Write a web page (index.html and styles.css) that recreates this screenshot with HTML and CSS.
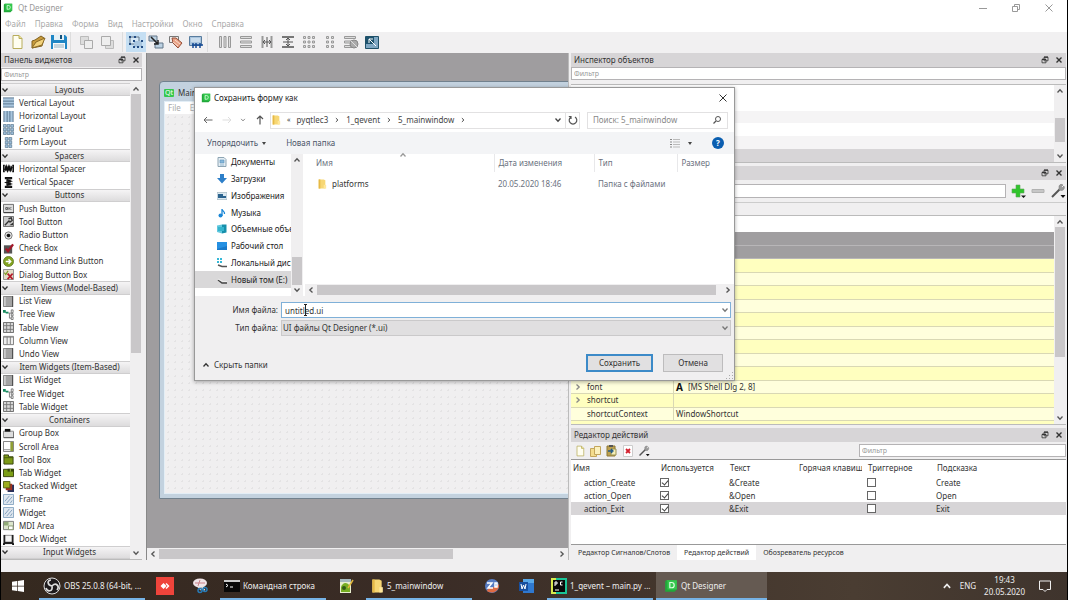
FILE: index.html
```html
<!DOCTYPE html>
<html lang="ru">
<head>
<meta charset="utf-8">
<title>Qt Designer</title>
<link rel="stylesheet" href="styles.css">
</head>
<body>
<svg class="defs" aria-hidden="true">
  <symbol id="chev-d" viewBox="0 0 8 8"><path d="M1.500 2.500 4 5.200 6.500 2.500" fill="none" stroke="currentColor" stroke-width="1.3"/></symbol>
  <symbol id="chev-u" viewBox="0 0 8 8"><path d="M1.500 5.500 4 2.800 6.500 5.500" fill="none" stroke="currentColor" stroke-width="1.3"/></symbol>
  <symbol id="chev-l" viewBox="0 0 8 8"><path d="M5.500 1.500 2.800 4 5.500 6.500" fill="none" stroke="currentColor" stroke-width="1.3"/></symbol>
  <symbol id="chev-r" viewBox="0 0 8 8"><path d="M2.500 1.500 5.200 4 2.500 6.500" fill="none" stroke="currentColor" stroke-width="1.3"/></symbol>
  <symbol id="float" viewBox="0 0 8 8"><path d="M3 1.2h4v3.6H3z M1 3.4h4v3.4H1z" fill="#d8d6d8" stroke="#333" stroke-width=".8"/><path d="M3 1.2h4M1 3.4h4" stroke="#333" stroke-width="1.2"/></symbol>
  <symbol id="close" viewBox="0 0 8 8"><path d="M1.5 1.5l5 5M6.500 1.500l-5 5" stroke="currentColor" stroke-width="1.4"/></symbol>
  <symbol id="qt" viewBox="0 0 12 12"><path d="M2 1h9v8l-2 2H1V2z" fill="#21a83a"/><path d="M2 1h9v8H3V2z" fill="#35c84e"/><path d="M5 3h1.500c3 0 3 4.500 0 4.500H5z" fill="none" stroke="#dfffe2"/></symbol>
  <symbol id="folder" viewBox="0 0 12 12"><path d="M2 .5h6l2 1v10H2z" fill="#f7d774"/><path d="M2 .5h2v11H2z" fill="#e6b947"/><path d="M8 7h3v4.500H8z" fill="#ffe79c"/></symbol>
  <symbol id="page" viewBox="0 0 16 16"><path d="M4 1.500h6l3 3v10H4z" fill="#fffef0" stroke="#b8ad5c"/><path d="M10 1.500v3h3" fill="#eee08d" stroke="#b8ad5c"/></symbol>
  <symbol id="wrench" viewBox="0 0 16 16"><path d="M2 14 10 6" stroke="#555" stroke-width="2"/><path d="M9 3c1-2 3-2 4-1l-2 2 1 1 2-2c1 2 0 4-2 4.500L9 7z" fill="#999" stroke="#777" stroke-width=".5"/><path d="M10.500 12h5L13 15z" fill="#111"/></symbol>

  <symbol id="w-v" viewBox="0 0 12 12"><path d="M0 1h12v10H0z" fill="#a9c6de"/><path d="M0 1h12M0 4.500h12M0 7.500h12M0 11h12" stroke="#56728b"/></symbol>
  <symbol id="w-h" viewBox="0 0 12 12"><path d="M1 0h10v12H1z" fill="#a9c6de"/><path d="M1 0v12M4.500 0v12M7.500 0v12M11 0v12" stroke="#56728b"/></symbol>
  <symbol id="w-g" viewBox="0 0 12 12"><path d="M.5.500h3v3h-3zm4 0h3v3h-3zm4 0h3v3h-3zm-8 4h3v3h-3zm4 0h3v3h-3zm4 0h3v3h-3zm-8 4h3v3h-3zm4 0h3v3h-3zm4 0h3v3h-3z" fill="#9fc0dc" stroke="#5f7b92" stroke-width=".8"/></symbol>
  <symbol id="w-f" viewBox="0 0 12 12"><path d="M2.500.500h3v3h-3zm4 0h3v3h-3zm-4 4h3v3h-3zm4 0h3v3h-3zm-4 4h3v3h-3zm4 0h3v3h-3z" fill="#9fc0dc" stroke="#5f7b92" stroke-width=".8"/></symbol>
  <symbol id="w-hs" viewBox="0 0 12 12"><path d="M0 2h2v8H0zM10 2h2v8h-2z" fill="#111"/><path d="M1 3h10v6H1z" fill="#777"/><path d="M2 8 3.500 4 5 8 6.500 4 8 8 10 4" fill="none" stroke="#111" stroke-width="2"/></symbol>
  <symbol id="w-vs" viewBox="0 0 12 12"><path d="M2 0h8v2.500H2zM2 9.500h8V12H2z" fill="#111"/><path d="M3.500 2h5v8h-5z" fill="#777"/><path d="M4 3l4 1.500L4 6l4 1.500L4 9" fill="none" stroke="#111" stroke-width="2"/></symbol>
  <symbol id="w-pb" viewBox="0 0 12 12"><path d="M.5 1.500h11v9H.5z" fill="#dcdcdc" stroke="#666"/><path d="M1 10.500h11" stroke="#333"/><path d="M3 5h2v2H3zM6.500 4.500v3M9 4.500 7.500 6 9 7.500" fill="none" stroke="#333" stroke-width=".8"/></symbol>
  <symbol id="w-tb" viewBox="0 0 12 12"><path d="M.5.500h11v11H.5z" fill="#c9c9c9" stroke="#666"/><path d="M2 10 7 5M6 3l3-1 1 3-3 2" fill="none" stroke="#333" stroke-width="1.500"/><path d="M7 10h4V7z" fill="#333"/></symbol>
  <symbol id="w-rb" viewBox="0 0 12 12"><circle cx="6" cy="6" r="4" fill="#ddd" stroke="#777"/><circle cx="6" cy="6" r="2" fill="#111"/></symbol>
  <symbol id="w-cb" viewBox="0 0 12 12"><path d="M1 2.500h9v9H1z" fill="#555"/><path d="M3 6l2.500 3L11 1.500" fill="none" stroke="#a3182a" stroke-width="2.500"/></symbol>
  <symbol id="w-cl" viewBox="0 0 12 12"><circle cx="6" cy="6" r="5.500" fill="#83a321" stroke="#55701a" stroke-width=".8"/><path d="M3 6h5M6 3.500 8.500 6 6 8.500" fill="none" stroke="#fff" stroke-width="1.500"/></symbol>
  <symbol id="w-db" viewBox="0 0 12 12"><path d="M.5.500h11v11H.5z" fill="#e3ddc9" stroke="#888"/><path d="M1.500 4 3 6l2.500-4" fill="none" stroke="#7d9b23" stroke-width="1.300"/><path d="M5 5l5.500 6M10.500 5 5 11" stroke="#b41b2b" stroke-width="1.800"/></symbol>
  <symbol id="w-list" viewBox="0 0 12 12"><path d="M.5.500h10v11H.5z" fill="#a3a3a3" stroke="#777"/><path d="M1 1h2v10H1z" fill="#ccc"/><path d="M10.500 0v12" stroke="#444"/></symbol>
  <symbol id="w-tree" viewBox="0 0 12 12"><path d="M0 1h3v3H0zM3 3h3v2H3z" fill="#16885d"/><path d="M6 4.500h3M7 4.500V10h2" fill="none" stroke="#777"/><path d="M9 1h2v3H9zM9 5h2v2.500H9zM9 8.500h2v3H9z" fill="#fff" stroke="#555" stroke-width=".8"/></symbol>
  <symbol id="w-table" viewBox="0 0 12 12"><path d="M.5.500h11v11H.5z" fill="#d7d7d7" stroke="#666"/><path d="M4 .5v11M.5 4h11M8 .5v11M.5 8h11" stroke="#777"/></symbol>
  <symbol id="w-col" viewBox="0 0 12 12"><path d="M.5 1.500h11v9H.5z" fill="#eee" stroke="#777"/><path d="M1 2.500h10" stroke="#999"/><path d="M4.500 2v8M8 2v8" stroke="#777"/></symbol>
  <symbol id="w-group" viewBox="0 0 12 12"><path d="M.5 3.500h11v7H.5z" fill="#ddd" stroke="#888"/><path d="M2 1h6v3H2z" fill="#111"/><path d="M1 10.500h11v-6" fill="none" stroke="#555"/></symbol>
  <symbol id="w-scroll" viewBox="0 0 12 12"><path d="M.5.500h11v11H.5z" fill="#fff" stroke="#777"/><path d="M8 1h3v10H8z" fill="#8f9e35"/><path d="M1 9.500h7" stroke="#888"/></symbol>
  <symbol id="w-tool" viewBox="0 0 12 12"><path d="M1 1h5v2h5v8H1z" fill="#7d9a18" stroke="#33400b"/><path d="M1 4h10" stroke="#465a0c"/></symbol>
  <symbol id="w-tab" viewBox="0 0 12 12"><path d="M.5 2.500h11v8H.5z" fill="#7c9e16" stroke="#33400b"/><path d="M5 2h7v3H5z" fill="#344608"/><path d="M8 2v3" stroke="#a9bf51"/></symbol>
  <symbol id="w-stack" viewBox="0 0 12 12"><path d="M5 4h7v8H5z" fill="#27305b"/><path d="M3 3h7v7H3z" fill="#a33023"/><path d="M.5.500h7v7h-7z" fill="#9dad1c" stroke="#526010"/></symbol>
  <symbol id="w-frame" viewBox="0 0 12 12"><path d="M.5.500h11v11H.5z" fill="#dfe7ef" stroke="#86a4c1"/><path d="M2 8l5-6M4 10l6-7M8 10l2-3" stroke="#7f9dba"/></symbol>
  <symbol id="w-mdi" viewBox="0 0 12 12"><path d="M.5 1.500h11v9H.5z" fill="#dce6cc" stroke="#777"/><path d="M1 2h5v4H1z" fill="#91ab78"/><path d="M6 6.500h5v4H6z" fill="#fff" stroke="#889770"/></symbol>
  <symbol id="w-dock" viewBox="0 0 12 12"><path d="M.5 1h11v10H.5z" fill="#222"/><path d="M2.500 1.500h7v7h-7z" fill="#f4f4f4"/><path d="M0 11h2M10 11h2" stroke="#111" stroke-width="2"/></symbol>
</svg>

<div class="app">
  <header class="titlebar">
    <svg class="i10"><use href="#qt"/></svg><span>Qt Designer</span>
    <div class="winbtns">
      <button aria-label="Свернуть"><svg viewBox="0 0 8 8" class="i8"><path d="M0 4.500h8" stroke="#999"/></svg></button>
      <button aria-label="Развернуть"><svg viewBox="0 0 8 8" class="i8"><path d="M.5 2.500h5v5h-5zM2.500 2V.5h5v5H6" fill="none" stroke="#999"/></svg></button>
      <button aria-label="Закрыть"><svg viewBox="0 0 8 8" class="i8"><path d="M.5.500l7 7M7.500.500l-7 7" stroke="#999"/></svg></button>
    </div>
  </header>
  <nav class="menubar">
    <button>Файл</button><button>Правка</button><button>Форма</button><button>Вид</button><button>Настройки</button><button>Окно</button><button>Справка</button>
  </nav>
  <div class="toolbar">
    <div class="tgroup">
      <button aria-label="Новая"><svg class="i16"><use href="#page"/></svg></button>
      <button aria-label="Открыть"><svg class="i16" viewBox="0 0 16 16"><path d="M2 14V7l3-1 6-4 3 2-2 8z" fill="#c89b3c" stroke="#80601e"/><path d="M2 14 6 8l9-4-3 7z" fill="#f2d27c" stroke="#8b6a26"/></svg></button>
      <button aria-label="Сохранить"><svg class="i16" viewBox="0 0 16 16"><path d="M0 1h14l2 2v12H0z" fill="#1f86c5"/><path d="M3 1h10v5H3z" fill="#e5f1f7"/><path d="M9 1h2v4H9z" fill="#14517b"/><path d="M2 9h12v6H2z" fill="#f5f9fb"/><path d="M3 11h10M3 13h10" stroke="#94b1c1"/></svg></button>
    </div>
    <div class="tgroup t2">
      <button aria-label="На задний план"><svg class="i16" viewBox="0 0 16 16"><path d="M2.500 2.500h8v8h-8z" fill="#ddd" stroke="#bbb"/><path d="M6.500 6.500h8v8h-8z" fill="#eee" stroke="#aaa"/></svg></button>
      <button aria-label="На передний план"><svg class="i16" viewBox="0 0 16 16"><path d="M6.500 6.500h8v8h-8z" fill="#ddd" stroke="#bbb"/><path d="M2.500 2.500h9v9h-9z" fill="#eee" stroke="#aaa"/></svg></button>
    </div>
    <div class="tgroup t3">
      <button class="on" aria-label="Изменение виджетов"><svg class="i16" viewBox="0 0 16 16"><path d="M2 3h9v7H2z" fill="#d6e9f7" stroke="#64788a"/><path d="M6 7h8v6H6z" fill="#a9c6df"/><path d="M1 2h2v2H1zM6 2h2v2H6zM13 6h2v2h-2zM5 6h2v2H5zM5 12h2v2H5zM13 12h2v2h-2zM9 12h2v2H9zM1 9h2v2H1z" fill="#234c83"/></svg></button>
      <button aria-label="Изменение сигналов"><svg class="i16" viewBox="0 0 16 16"><path d="M1 2h8v5H1zM7 9h8v5H7z" fill="#bcd1e2" stroke="#637789"/><path d="M3 3l7 7M10 6v4H6" fill="none" stroke="#222" stroke-width="1.500"/></svg></button>
      <button aria-label="Изменение партнеров"><svg class="i16" viewBox="0 0 16 16"><path d="M1.500 2.500h9v6h-9z" fill="#eee" stroke="#777"/><path d="M4 4l4 0 6 5-4 5-5-5z" fill="#e9a184" stroke="#96503a"/><path d="M5 8l5 4M7 6l5 4" stroke="#f7ddd0"/></svg></button>
      <button aria-label="Порядок обхода"><svg class="i16" viewBox="0 0 16 16"><path d="M1.500 2.500h12v9h-12z" fill="#a9c4dd" stroke="#587c9e"/><path d="M3 5h9M3 7h9" stroke="#e9f4fc"/><path d="M4 11h11M5 9v5M8 9v5M12 9v5" stroke="#174b94" stroke-width="1.500"/></svg></button>
    </div>
    <div class="tgroup t4">
      <button aria-label="По горизонтали"><svg class="i16" viewBox="0 0 16 16"><path d="M2.500 2.500h2v11h-2zM7 2.500h2v11H7zM11.500 2.500h2v11h-2z" fill="#ddd" stroke="#999"/></svg></button>
      <button aria-label="По вертикали"><svg class="i16" viewBox="0 0 16 16"><path d="M2.500 2.500h11v2h-11zM2.500 7h11v2h-11zM2.500 11.500h11v2h-11z" fill="#ddd" stroke="#999"/></svg></button>
      <button aria-label="Разделитель по горизонтали"><svg class="i16" viewBox="0 0 16 16"><path d="M3.500 2v12M12.500 2v12" stroke="#999" stroke-width="2"/><path d="M8 3v10M4 8h8M6 6 4 8l2 2M10 6l2 2-2 2" fill="none" stroke="#555"/></svg></button>
      <button aria-label="Разделитель по вертикали"><svg class="i16" viewBox="0 0 16 16"><path d="M2 3h12M2 13h12" stroke="#777" stroke-width="2"/><path d="M3 8h10M8 4v8M6 6l2-2 2 2M6 10l2 2 2-2" fill="none" stroke="#555"/></svg></button>
      <button aria-label="По сетке"><svg class="i16" viewBox="0 0 16 16"><path d="M2.500 2.500h2v2h-2zm4.500 0h2v2H7zm4.500 0h2v2h-2zM2.500 7h2v2h-2zM7 7h2v2H7zm4.500 0h2v2h-2zm-9 4.500h2v2h-2zm4.500 0h2v2H7zm4.500 0h2v2h-2z" fill="#ddd" stroke="#999"/></svg></button>
      <button aria-label="Формой"><svg class="i16" viewBox="0 0 16 16"><path d="M4.500 2.500h2v2h-2zm5 0h2v2h-2zM4.500 7h2v2h-2zm5 0h2v2h-2zm-5 4.500h2v2h-2zm5 0h2v2h-2z" fill="#ddd" stroke="#999"/></svg></button>
      <button aria-label="Удалить компоновщик"><svg class="i16" viewBox="0 0 16 16"><path d="M1.500 2.500h11v2h-11zM1.500 7h8v2h-8zM1.500 11.500h8v2h-8z" fill="#ddd" stroke="#999"/><circle cx="11" cy="10" r="4" fill="#aaa" stroke="#888"/><path d="M8 7l6 6" stroke="#ddd"/></svg></button>
      <button aria-label="Подогнать размер"><svg class="i16" viewBox="0 0 16 16"><path d="M1.500 2.500h13v12h-13z" fill="#7fa7c3" stroke="#1f5169"/><path d="M2 3h8v7H2z" fill="#1d526d"/><path d="M5 5l7 7M5 9V5h4" fill="none" stroke="#fff"/></svg></button>
    </div>
  </div>

  <main class="work">
    <aside class="dock left">
      <div class="docktitle"><h2>Панель виджетов</h2><button aria-label="Открепить"><svg class="i8"><use href="#float"/></svg></button><button aria-label="Закрыть"><svg class="i8"><use href="#close"/></svg></button></div>
      <input class="filter" type="text" placeholder="Фильтр" aria-label="Фильтр виджетов">
      <div class="boxwrap">
        <ul class="widgets">
          <li class="cat"><svg class="i8"><use href="#chev-d"/></svg>Layouts</li>
          <li><svg class="i11"><use href="#w-v"/></svg>Vertical Layout</li>
          <li><svg class="i11"><use href="#w-h"/></svg>Horizontal Layout</li>
          <li><svg class="i11"><use href="#w-g"/></svg>Grid Layout</li>
          <li><svg class="i11"><use href="#w-f"/></svg>Form Layout</li>
          <li class="cat"><svg class="i8"><use href="#chev-d"/></svg>Spacers</li>
          <li><svg class="i11"><use href="#w-hs"/></svg>Horizontal Spacer</li>
          <li><svg class="i11"><use href="#w-vs"/></svg>Vertical Spacer</li>
          <li class="cat"><svg class="i8"><use href="#chev-d"/></svg>Buttons</li>
          <li><svg class="i11"><use href="#w-pb"/></svg>Push Button</li>
          <li><svg class="i11"><use href="#w-tb"/></svg>Tool Button</li>
          <li><svg class="i11"><use href="#w-rb"/></svg>Radio Button</li>
          <li><svg class="i11"><use href="#w-cb"/></svg>Check Box</li>
          <li><svg class="i11"><use href="#w-cl"/></svg>Command Link Button</li>
          <li><svg class="i11"><use href="#w-db"/></svg>Dialog Button Box</li>
          <li class="cat"><svg class="i8"><use href="#chev-d"/></svg>Item Views (Model-Based)</li>
          <li><svg class="i11"><use href="#w-list"/></svg>List View</li>
          <li><svg class="i11"><use href="#w-tree"/></svg>Tree View</li>
          <li><svg class="i11"><use href="#w-table"/></svg>Table View</li>
          <li><svg class="i11"><use href="#w-col"/></svg>Column View</li>
          <li><svg class="i11"><use href="#w-list"/></svg>Undo View</li>
          <li class="cat"><svg class="i8"><use href="#chev-d"/></svg>Item Widgets (Item-Based)</li>
          <li><svg class="i11"><use href="#w-list"/></svg>List Widget</li>
          <li><svg class="i11"><use href="#w-tree"/></svg>Tree Widget</li>
          <li><svg class="i11"><use href="#w-table"/></svg>Table Widget</li>
          <li class="cat"><svg class="i8"><use href="#chev-d"/></svg>Containers</li>
          <li><svg class="i11"><use href="#w-group"/></svg>Group Box</li>
          <li><svg class="i11"><use href="#w-scroll"/></svg>Scroll Area</li>
          <li><svg class="i11"><use href="#w-tool"/></svg>Tool Box</li>
          <li><svg class="i11"><use href="#w-tab"/></svg>Tab Widget</li>
          <li><svg class="i11"><use href="#w-stack"/></svg>Stacked Widget</li>
          <li><svg class="i11"><use href="#w-frame"/></svg>Frame</li>
          <li><svg class="i11"><use href="#w-frame"/></svg>Widget</li>
          <li><svg class="i11"><use href="#w-mdi"/></svg>MDI Area</li>
          <li><svg class="i11"><use href="#w-dock"/></svg>Dock Widget</li>
          <li class="cat"><svg class="i8"><use href="#chev-d"/></svg>Input Widgets</li>
        </ul>
        <div class="vscroll"><svg class="i8"><use href="#chev-u"/></svg><div class="track"><i class="thumb th-left"></i></div><svg class="i8"><use href="#chev-d"/></svg></div>
      </div>
    </aside>

    <section class="mdi">
      <div class="canvas">
        <div class="subwin">
          <div class="subtitle"><span class="qtlogo">Qt</span><span class="subname">MainWindow</span></div>
          <div class="subbody"><div class="submenu"><span>File</span><span>Edit</span></div><div class="form"></div></div>
        </div>
      </div>
      <div class="hscroll"><svg class="i8"><use href="#chev-l"/></svg><div class="track"><i class="thumb th-mdi"></i></div><svg class="i8"><use href="#chev-r"/></svg></div>
    </section>

    <aside class="dock right">
      <section class="inspector">
        <div class="docktitle"><h2>Инспектор объектов</h2><button aria-label="Открепить"><svg class="i8"><use href="#float"/></svg></button><button aria-label="Закрыть"><svg class="i8"><use href="#close"/></svg></button></div>
        <input class="filter" type="text" placeholder="Фильтр" aria-label="Фильтр объектов">
        <div class="objtree">
          <div class="objrows"><div></div><div></div><div class="alt"></div><div></div><div class="alt"></div><div class="sel"></div></div>
          <div class="vscroll"><svg class="i8"><use href="#chev-u"/></svg><div class="track"><i class="thumb th-obj"></i></div><svg class="i8"><use href="#chev-d"/></svg></div>
        </div>
      </section>
      <section class="props">
        <div class="docktitle"><button class="first" aria-label="Открепить"><svg class="i8"><use href="#float"/></svg></button><button aria-label="Закрыть"><svg class="i8"><use href="#close"/></svg></button></div>
        <div class="proptools">
          <input class="filter" type="text" aria-label="Фильтр свойств">
          <button aria-label="Добавить"><svg class="i16" viewBox="0 0 16 16"><path d="M6 2h4v4h4v4h-4v4H6v-4H2V6h4z" fill="#2fc52b" stroke="#5ea45b" stroke-width=".6"/><path d="M11 12.500h5l-2.500 2.500z" fill="#111"/></svg></button>
          <button aria-label="Удалить"><svg class="i16" viewBox="0 0 16 16"><path d="M2 6.500h12v3H2z" fill="#c7c7c7" stroke="#b2b2b2"/></svg></button>
          <button aria-label="Настроить"><svg class="i16"><use href="#wrench"/></svg></button>
        </div>
        <div class="objname"></div>
        <div class="proptree">
          <div class="proprows">
            <div class="phead"></div>
            <div class="prow cap"></div><div class="prow cap"></div>
            <div class="prow"></div><div class="prow"></div><div class="prow"></div><div class="prow"></div><div class="prow"></div><div class="prow"></div><div class="prow"></div><div class="prow"></div><div class="prow"></div>
            <div class="prow"><span><svg class="i8"><use href="#chev-r"/></svg>font</span><span><b>A</b>[MS Shell Dlg 2, 8]</span></div>
            <div class="prow"><span><svg class="i8"><use href="#chev-r"/></svg>shortcut</span><span></span></div>
            <div class="prow"><span><i class="i8"></i>shortcutContext</span><span>WindowShortcut</span></div>
            <div class="plast"></div>
          </div>
          <div class="vscroll"><svg class="i8"><use href="#chev-u"/></svg><div class="track"><i class="thumb th-prop"></i></div><svg class="i8"><use href="#chev-d"/></svg></div>
        </div>
      </section>
      <section class="actions">
        <div class="docktitle"><h2>Редактор действий</h2><button aria-label="Открепить"><svg class="i8"><use href="#float"/></svg></button><button aria-label="Закрыть"><svg class="i8"><use href="#close"/></svg></button></div>
        <div class="acttools">
          <button aria-label="Создать"><svg class="i12"><use href="#page"/></svg></button>
          <button aria-label="Копировать"><svg class="i12" viewBox="0 0 12 12"><path d="M.5 3.500h6v8h-6z" fill="#f4dd8d" stroke="#c3a65c"/><path d="M4.500 1.500h6v8h-6z" fill="#fbf1bd" stroke="#c3a65c"/></svg></button>
          <button aria-label="Вставить"><svg class="i12" viewBox="0 0 12 12"><path d="M1 1h8v10H1z" fill="#bda04f" stroke="#8d7635"/><path d="M3 0h4v2H3z" fill="#555"/><path d="M5 4h5v6H5z" fill="#f6eeb5" stroke="#999255"/><path d="M2 6h4M5 4l2 2-2 2" fill="none" stroke="#245a86" stroke-width="1.300"/></svg></button>
          <button aria-label="Удалить"><svg class="i12" viewBox="0 0 12 12"><path d="M1.500.500h9v11h-9z" fill="#fff" stroke="#ccc"/><path d="M4 4l4 4M8 4 4 8" stroke="#d3202e" stroke-width="1.800"/></svg></button>
          <button aria-label="Настроить"><svg class="i12"><use href="#wrench"/></svg></button>
          <input class="filter" type="text" placeholder="Фильтр" aria-label="Фильтр действий">
        </div>
        <div class="acttable">
          <table>
            <thead><tr><th>Имя</th><th>Используется</th><th>Текст</th><th><span class="clip">Горячая клавиша</span></th><th>Триггерное</th><th>Подсказка</th></tr></thead>
            <tbody>
              <tr><td>action_Create</td><td><input type="checkbox" checked aria-label="Используется Create"></td><td>&amp;Create</td><td></td><td><input type="checkbox" aria-label="Триггерное Create"></td><td>Create</td></tr>
              <tr><td>action_Open</td><td><input type="checkbox" checked aria-label="Используется Open"></td><td>&amp;Open</td><td></td><td><input type="checkbox" aria-label="Триггерное Open"></td><td>Open</td></tr>
              <tr class="sel"><td>action_Exit</td><td><input type="checkbox" checked aria-label="Используется Exit"></td><td>&amp;Exit</td><td></td><td><input type="checkbox" aria-label="Триггерное Exit"></td><td>Exit</td></tr>
            </tbody>
          </table>
        </div>
        <div class="tabs"><button>Редактор Сигналов/Слотов</button><button class="on">Редактор действий</button><button>Обозреватель ресурсов</button></div>
      </section>
    </aside>
  </main>
</div>

<div class="dialog" role="dialog" aria-label="Сохранить форму как">
  <div class="dtitle"><svg class="i10"><use href="#qt"/></svg><span>Сохранить форму как</span><button aria-label="Закрыть"><svg class="i8" viewBox="0 0 8 8"><path d="M.5.500l7 7M7.500.500l-7 7" stroke="#333"/></svg></button></div>
  <div class="dnav">
    <div class="arrows">
      <button aria-label="Назад"><svg class="i10" viewBox="0 0 10 10"><path d="M1 5h8.500M4 2 1 5l3 3" fill="none" stroke="#666"/></svg></button>
      <button aria-label="Вперед"><svg class="i10" viewBox="0 0 10 10"><path d="M.5 5H9M6 2l3 3-3 3" fill="none" stroke="#ddd"/></svg></button>
      <button aria-label="Последние"><svg class="i6 dim"><use href="#chev-d"/></svg></button>
      <button aria-label="Вверх"><svg class="i10" viewBox="0 0 10 10"><path d="M5 9.500V1M2 4l3-3 3 3" fill="none" stroke="#555" stroke-width="1.200"/></svg></button>
    </div>
    <div class="addr"><svg class="i10"><use href="#folder"/></svg><small>«</small><a href="#">pyqtlec3</a><svg class="i6"><use href="#chev-r"/></svg><a href="#">1_qevent</a><svg class="i6"><use href="#chev-r"/></svg><a href="#">5_mainwindow</a><svg class="i6"><use href="#chev-r"/></svg><svg class="i8 end"><use href="#chev-d"/></svg></div>
    <button class="refresh" aria-label="Обновить"><svg class="i10" viewBox="0 0 10 10"><path d="M3 2a3.800 3.800 0 1 0 4 0M3 4V1.500H.8" fill="none" stroke="#555" stroke-width="1.200"/></svg></button>
    <div class="search"><input type="text" placeholder="Поиск: 5_mainwindow" aria-label="Поиск"><svg class="i10" viewBox="0 0 10 10"><circle cx="6" cy="4" r="2.500" fill="none" stroke="#555"/><path d="M4 6 1.500 8.500" stroke="#555" stroke-width="1.200"/></svg></div>
  </div>
  <div class="dtools"><button>Упорядочить <i class="tri"></i></button><button>Новая папка</button>
    <button class="view" aria-label="Вид"><svg class="i10" viewBox="0 0 10 10"><path d="M0 1.500h2M0 4h2M0 6.500h2M0 9h2" stroke="#888"/><path d="M3 1.500h7M3 4h7M3 6.500h7M3 9h7" stroke="#bbb"/></svg><i class="tri"></i></button>
    <button class="help" aria-label="Справка">?</button></div>
  <div class="dmain">
    <ul class="places">
      <li><svg class="i10" viewBox="0 0 10 10"><path d="M1 .5h6l2 2v7H1z" fill="#e4edf3" stroke="#8da5b4"/><path d="M3 3h4v3H3zM3 8h4" fill="#86b7db" stroke="#5a93be" stroke-width=".6"/></svg>Документы</li>
      <li><svg class="i10" viewBox="0 0 10 10"><path d="M3 0h4v4h3L5 9.500 0 4h3z" fill="#2d7fc9"/></svg>Загрузки</li>
      <li><svg class="i10" viewBox="0 0 10 10"><path d="M0 1.500h10v7H0z" fill="#dce9f1" stroke="#94a9b6" stroke-width=".6"/><path d="M1 3h5v2h3v2H1z" fill="#2b638e"/></svg>Изображения</li>
      <li><svg class="i10" viewBox="0 0 10 10"><circle cx="3.500" cy="7.500" r="2" fill="#1b87d6"/><path d="M5 8V1c0 2 3 2 2.500 5" fill="none" stroke="#1b87d6" stroke-width="1.300"/></svg>Музыка</li>
      <li><svg class="i10" viewBox="0 0 10 10"><path d="M0 1.500 5 .5v9L0 8z" fill="#62c8de"/><path d="M5 .5h4.500v8L5 9.500z" fill="#168fab"/><path d="M1 3h6v4H1z" fill="#35b4cd"/></svg>Объемные объекты</li>
      <li><svg class="i10" viewBox="0 0 10 10"><path d="M0 1h10v8H0z" fill="#1979c9"/><path d="M0 1h10v4L0 8z" fill="#2590e2"/></svg>Рабочий стол</li>
      <li><svg class="i10" viewBox="0 0 10 10"><path d="M0 0h2v2H0zM3 0h2v2H3zM0 3h2v2H0zM3 3h2v2H3z" fill="#35b8d7"/><path d="M1 7l4 1.500h5" fill="none" stroke="#555" stroke-width="1.500"/></svg>Локальный диск (C:)</li>
      <li class="sel"><svg class="i10" viewBox="0 0 10 10"><path d="M1 5l4 3h5" fill="none" stroke="#444" stroke-width="1.500"/><path d="M1 4l5 2.500h4" fill="none" stroke="#eee"/></svg>Новый том (E:)</li>
    </ul>
    <div class="vscroll"><svg class="i8"><use href="#chev-u"/></svg><div class="track"><i class="thumb th-dlg"></i></div><svg class="i8"><use href="#chev-d"/></svg></div>
    <div class="files">
      <svg class="i8 sort"><use href="#chev-u"/></svg>
      <table>
        <thead><tr><th>Имя</th><th>Дата изменения</th><th>Тип</th><th>Размер</th></tr></thead>
        <tbody><tr><td><span class="fname"><svg class="i10"><use href="#folder"/></svg>platforms</span></td><td>20.05.2020 18:46</td><td>Папка с файлами</td><td></td></tr></tbody>
      </table>
      <div class="hscroll"><svg class="i8"><use href="#chev-l"/></svg><div class="track"><i class="thumb th-files"></i></div><svg class="i8"><use href="#chev-r"/></svg></div>
    </div>
  </div>
  <div class="dfields">
    <label for="fn">Имя файла:</label><div class="combo name"><input id="fn" type="text" value="untitled.ui"><svg class="i8"><use href="#chev-d"/></svg>
      <svg class="caret" viewBox="0 0 5 12"><path d="M1 .5h3M1 11.500h3M2.500.500v11" stroke="#222" fill="none"/></svg></div>
    <label for="ft">Тип файла:</label><div class="combo type"><select id="ft"><option>UI файлы Qt Designer (*.ui)</option></select><svg class="i8"><use href="#chev-d"/></svg></div>
  </div>
  <div class="dfoot"><button class="hide"><svg class="i8"><use href="#chev-u"/></svg>Скрыть папки</button><button class="btn primary">Сохранить</button><button class="btn">Отмена</button></div>
  <svg class="i8 grip" viewBox="0 0 8 8"><path d="M6 0h1v1H6zM6 3h1v1H6zM3 3h1v1H3zM6 6h1v1H6zM3 6h1v1H3zM0 6h1v1H0z" fill="#aaa"/></svg>
</div>

<footer class="taskbar">
  <button class="task icon start" aria-label="Пуск"><svg class="i12" viewBox="0 0 12 12"><path d="M0 1.700 5 1v4.700H0zM5.700.900 12 0v5.700H5.700zM0 6.400h5V11l-5-.700zM5.700 6.400H12V12l-6.300-.900z" fill="#fff"/></svg></button>
  <button class="task wide run"><svg class="i18" viewBox="0 0 18 18"><circle cx="9" cy="9" r="8" fill="#1e1b1d" stroke="#ddd"/><path d="M9 9C4 8 4 3 8 3M9 9c4-4 8 0 5 4M9 9c1 6-5 6-6 2" fill="none" stroke="#ddd" stroke-width="1.700"/></svg>OBS 25.0.8 (64-bit, ...</button>
  <button class="task icon" aria-label="AnyDesk"><svg class="i18" viewBox="0 0 18 18"><path d="M0 0h18v18H0z" fill="#ef443b"/><path d="M7.500 6 10.500 9l-3 3-3-3zM10.500 6l3 3-3 3-1-1 2-2-2-2z" fill="#fff"/></svg></button>
  <button class="task icon" aria-label="Ножницы"><svg class="i16" viewBox="0 0 16 16"><ellipse cx="8" cy="5" rx="7" ry="4.500" fill="#f0e4e8"/><path d="M3 5h10M8 2 6 8" stroke="#c98088"/><path d="M6 9l7 3M12 8l-4 4" stroke="#ddd" stroke-width="1.500"/><circle cx="8" cy="12.500" r="2" fill="none" stroke="#287bb7" stroke-width="1.500"/><circle cx="13" cy="11.500" r="2" fill="none" stroke="#287bb7" stroke-width="1.500"/></svg></button>
  <button class="task wide run"><svg class="i16" viewBox="0 0 16 16"><path d="M0 2h16v12H0z" fill="#080808"/><path d="M0 2h16v2H0z" fill="#ccc"/><path d="M2 6l2 1.500L2 9M6 9h3" fill="none" stroke="#fff"/></svg>Командная строка</button>
  <button class="task icon" aria-label="Notepad++"><svg class="i16" viewBox="0 0 16 16"><path d="M2 1h10l1 2v12H2z" fill="#e8efcf"/><path d="M2 1h11v3H2z" fill="#a4b8bd"/><path d="M3 9c2-5 6-5 9-1v6H3z" fill="#76ad21"/><path d="M15 2 10 10" stroke="#dfb63c" stroke-width="1.500"/><circle cx="6" cy="10" r="2" fill="#315a16"/></svg></button>
  <button class="task wide run"><svg class="i14"><use href="#folder"/></svg>5_mainwindow</button>
  <button class="task icon" aria-label="Zona"><svg class="i16" viewBox="0 0 16 16"><circle cx="8" cy="8" r="7" fill="#577cc3"/><path d="M3 13c0-4 10-3 12-7 1 6-6 11-12 7z" fill="#df6b43"/><path d="M3 5h5L4 10h5M11 5h2v4h-2z" fill="none" stroke="#fff" stroke-width="1.500"/></svg></button>
  <button class="task icon" aria-label="Word"><svg class="i16" viewBox="0 0 16 16"><path d="M4 1h11v14H4z" fill="#2f78cf"/><path d="M4 1h11v4H4z" fill="#58a8e8"/><path d="M0 4h9v9H0z" fill="#174f9e"/><path d="M2 6l1 5 1.500-4L6 11l1-5" fill="none" stroke="#fff"/></svg></button>
  <button class="task wide run"><svg class="i16" viewBox="0 0 16 16"><path d="M0 0h8v16H0z" fill="#d8e94c"/><path d="M5 0h11v16H5z" fill="#1ac497"/><path d="M2 2h12v12H2z" fill="#080808"/><path d="M4 8V4h2v2H4M11.500 4h-2v3h2M4 12h4" fill="none" stroke="#fff"/></svg>1_qevent – main.py ...</button>
  <button class="task wide run active"><svg class="i14"><use href="#qt"/></svg>Qt Designer</button>
  <div class="tray"><svg class="i10"><use href="#chev-u"/></svg><span>ENG</span><time>19:43<br>20.05.2020</time><svg class="i12" viewBox="0 0 12 12"><path d="M.5 1h11v8.500H8L6 11.500 4 9.500H.5z" fill="none" stroke="#eee"/></svg></div>
</footer>
</body>
</html>
```
FILE: styles.css
```css
* { box-sizing: border-box; }
html, body { height: 100%; margin: 0; }
body {
  display: flex; flex-direction: column; position: relative; overflow: hidden;
  background: #f0eff0; color: #333; border: solid #000; border-width: 0 1px;
  font: 8px/12px "Noto Sans", "Open Sans", sans-serif;
}
button { font: inherit; color: inherit; background: none; border: 0; padding: 0; display: flex; align-items: center; white-space: nowrap; }
input, select { font: inherit; color: inherit; margin: 0; border-radius: 0; min-width: 0; }
ul { list-style: none; margin: 0; padding: 0; }
h2 { font: inherit; margin: 0; }
a { color: inherit; text-decoration: none; }
table { border-collapse: collapse; table-layout: fixed; }
th { font-weight: normal; text-align: left; }
th, td { padding: 0; white-space: nowrap; overflow: hidden; }
svg { flex: none; display: block; }
.defs { display: none; }
.i6 { width: 6px; height: 6px; }
.i8 { width: 8px; height: 8px; flex: none; }
.i10 { width: 10px; height: 10px; }
.i11 { width: 11px; height: 11px; }
.i12 { width: 12px; height: 12px; }
.i14 { width: 14px; height: 14px; }
.i16 { width: 16px; height: 16px; }
.i18 { width: 18px; height: 18px; }

.app { flex: 1; min-height: 0; display: flex; flex-direction: column; padding-bottom: 12px; }
.titlebar { display: flex; align-items: center; gap: 5px; height: 16px; padding-left: 2px; background: #fff; color: #999; }
.winbtns { display: flex; gap: 25px; margin-left: auto; padding-right: 14px; }
.menubar { display: flex; gap: 9px; height: 16px; padding-left: 4px; background: #fff; color: #aaa; }

.toolbar { display: flex; height: 21px; padding: 0 0 1px 6px; background: #f1f0f1; }
.tgroup { display: flex; align-items: center; gap: 1px; padding-right: 1px; border-right: 1px solid #ddd; }
.tgroup button { width: 20px; height: 20px; justify-content: center; }
.t2, .t3, .t4 { padding-left: 5px; }
.t2 { padding-right: 5px; }
.t3 { gap: 0; padding-left: 3px; }
.t4 { border: 0; padding-left: 7px; }
.tgroup .on { background: #c5dff3; }

.work { flex: 1; min-height: 0; display: flex; }
.dock { display: flex; flex-direction: column; }
.docktitle { display: flex; align-items: center; height: 14px; padding: 0 3px 0 3px; gap: 6px; background: #d7d5d7; flex: none; }
.docktitle h2 { margin-right: auto; }
.docktitle .first { margin-left: auto; }
.filter { display: block; width: 100%; height: 13px; padding: 0 2px; border: 1px solid #b5b3b5; background: #fff; outline: 0; font-size: 7px; }
.filter::placeholder { color: #999; opacity: 1; }
.left { width: 145px; padding: 0 4px 0 0; }
.left .docktitle, .left .filter { width: 141px; margin-bottom: 1px; }
.left .docktitle { padding-right: 2px; }
.boxwrap { flex: 1; min-height: 0; display: flex; margin-top: 1px; border-bottom: 1px solid #bbb; }
.widgets { flex: 1; display: flex; flex-direction: column; background: #fff; overflow: hidden; }
.widgets li { flex: 1 1 13px; display: flex; align-items: center; gap: 5px; padding-left: 2px; min-height: 0; white-space: nowrap; }
.widgets .cat { justify-content: center; padding: 0; gap: 0; background: linear-gradient(#f5f4f5, #dddcdd); border: solid #cfcecf; border-width: 1px 0; }
.cat svg { margin-right: auto; }
.widgets .cat::after { content: ""; margin-left: auto; }

.vscroll { width: 12px; display: flex; flex-direction: column; align-items: center; justify-content: space-between; padding: 2px 0; background: #f0eff0; color: #555; flex: none; }
.vscroll .track { flex: 1; width: 100%; padding: 1px; display: flex; flex-direction: column; }
.hscroll { height: 12px; display: flex; align-items: center; padding: 0 2px; background: #f0eff0; color: #555; flex: none; }
.hscroll .track { flex: 1; height: 100%; padding: 1px 2px; display: flex; }
.thumb { display: block; background: #c9c7c9; flex: 1; }
.th-left { flex: 0 0 57%; }
.th-mdi { flex: 0 0 74%; }
.th-obj { flex: 0 0 44%; margin-top: 22px; }
.th-prop { flex: 0 0 70%; }
.th-dlg { flex: 0 0 23%; margin-top: auto; }
.th-files { margin-right: 6px; }

.mdi { flex: 1; min-width: 0; display: flex; flex-direction: column; border-left: 1px solid #888; }
.canvas { flex: 1; position: relative; overflow: hidden; background: #9f9d9f; }
.subwin { position: absolute; left: 12px; right: -60px; top: 28px; bottom: 49px; padding: 0 4px 4px; display: flex; flex-direction: column; background: #c3d2df; border: 1px solid #71818e; border-radius: 4px 4px 0 0; }
.subtitle { display: flex; align-items: center; gap: 4px; height: 19px; padding-top: 2px; }
.subname { width: 20px; overflow: hidden; }
.qtlogo { background: #35c84e; color: #fff; font-size: 7px; line-height: 8px; padding: 0 1px; border-radius: 1px; }
.subbody { flex: 1; display: flex; flex-direction: column; border: 1px solid #e3eef6; background: #f0eff0; }
.submenu { display: flex; gap: 9px; padding-left: 3px; background: #fff; color: #aaa; }
.form { flex: 1; background: radial-gradient(#e4e3e4 1px, transparent 1px) 0 0 / 7px 7px; }

.right { width: 499px; padding: 0 1px 0 2px; border-left: 1px solid #bbb; }
.objtree { display: flex; height: 79px; margin-top: 4px; border: solid #bbb; border-width: 1px 0; background: #fff; }
.objrows { flex: 1; display: flex; flex-direction: column; }
.objrows div { flex: 1; }
.objrows .alt { background: #f5f4f5; }
.objrows .sel { background: #d7d5d7; }
.inspector { margin-bottom: 3px; }
.props { flex: 1; min-height: 0; display: flex; flex-direction: column; }
.proptools { display: flex; align-items: center; gap: 4px; height: 23px; padding-left: 3px; border-bottom: 1px solid #ccc; }
.proptools .filter { flex: 1; height: 14px; }
.objname { height: 12px; }
.proptree { flex: 1; min-height: 0; display: flex; border: solid #bbb; border-width: 1px 0; }
.proprows { flex: 1; display: flex; flex-direction: column; background: #fff; }
.phead { height: 16px; }
.prow { flex: 1; min-height: 0; display: grid; grid-template-columns: 102px 1fr; align-items: center; background: #ffffbf; border-bottom: 1px solid #d9d8b4; }
.prow:nth-child(odd) { background: #ffffdc; }
.prow.cap { background: #a09ea0; border-color: #b8b6b8; }
.prow span { display: flex; align-items: center; gap: 5px; height: 100%; padding-left: 3px; color: #333; }
.prow svg { color: #888; }
.prow span + span { border-left: 1px solid #d9d8b4; padding-left: 2px; }
.prow b { font-size: 10px; color: #111; }
.plast { height: 3px; background: #ffffbf; }
.actions { margin-top: 3px; }
.acttools { display: flex; align-items: center; gap: 4px; height: 17px; padding-left: 3px; }
.acttools .filter { width: 207px; margin-left: auto; }
.acttable { height: 86px; background: #fff; border: solid #999; border-width: 1px 0; }
.acttable table { width: 100%; }
.acttable th { width: 69px; height: 16px; padding-left: 2px; }
.acttable th:first-child { width: 88px; padding-left: 2px; }
.acttable th:last-child { width: auto; }
.clip { display: block; width: 63px; overflow: hidden; }
.acttable td { height: 13px; line-height: 13px; padding-left: 1px; }
.acttable td:first-child { padding-left: 13px; }
.acttable .sel { background: #d7d5d7; }
.acttable input { appearance: none; display: block; position: relative; width: 9px; height: 9px; border: 1px solid #666; background: #fff; }
.acttable input:checked::after { content: ""; position: absolute; left: 2px; top: 0; width: 3px; height: 5px; border: solid #444; border-width: 0 1px 1px 0; transform: rotate(40deg); }
.tabs { display: flex; height: 15px; font-size: 7px; }
.tabs button { padding: 0 7px; }
.tabs .on { background: #fff; padding: 0 7px; }

.dialog { position: absolute; left: 193px; top: 87px; width: 541px; display: flex; flex-direction: column; background: #fff; border: 1px solid #999; box-shadow: 0 1px 4px #0005; }
.dtitle { display: flex; align-items: center; gap: 3px; height: 20px; padding: 0 7px 0 6px; color: #222; }
.dtitle button { margin-left: auto; }
.dnav { display: flex; align-items: center; height: 24px; padding: 0 6px 0 8px; }
.arrows { display: flex; align-items: center; justify-content: space-between; width: 62px; margin-right: 5px; }
.dim { color: #888; }
.addr { flex: 1; display: flex; align-items: center; gap: 6px; height: 17px; border: 1px solid #e2e1e2; color: #444; }
.addr small { font-size: 7px; }
.end { margin-left: auto; margin-right: 3px; }
.refresh { height: 17px; width: 14px; justify-content: center; border: solid #e2e1e2; border-width: 1px 1px 1px 0; margin-right: 7px; }
.search { display: flex; align-items: center; width: 141px; height: 17px; padding: 0 5px; border: 1px solid #e2e1e2; }
.search input { flex: 1; border: 0; padding: 0; outline: 0; }
.search input::placeholder { color: #888; opacity: 1; }
.dtools { display: flex; align-items: center; gap: 20px; height: 22px; padding: 0 10px 0 12px; background: #f3f4f6; color: #4b5468; }
.tri { display: inline-block; margin-left: 4px; border: 2px solid transparent; border-top: 3px solid #444; border-bottom: 0; }
.view { margin-left: auto; gap: 4px; }
.help { width: 12px; height: 12px; justify-content: center; border-radius: 50%; background: #0a5eb0; color: #fff; font-weight: bold; }
.dmain { display: flex; height: 142px; }
.places { width: 96px; padding-bottom: 8px; overflow: hidden; display: flex; flex-direction: column; color: #222; }
.places li { flex: 1; display: flex; align-items: center; gap: 4px; padding-left: 22px; white-space: nowrap; }
.places .sel { background: #d9d8d9; }
.files { flex: 1; min-width: 0; position: relative; display: flex; flex-direction: column; padding-left: 2px; }
.files table { width: 100%; color: #6b7280; margin-bottom: auto; }
.files th { width: 100px; height: 18px; padding-left: 4px; border-right: 1px solid #e8e8ea; }
.files th:first-child { width: 189px; padding-left: 11px; }
.files th:nth-child(3) { width: 83px; }
.files th:last-child { width: auto; border: 0; }
.files td { height: 24px; padding-left: 4px; }
.files td:first-child { padding-left: 12px; color: #333; }
.fname { display: flex; align-items: center; gap: 5px; }
.sort { position: absolute; left: 96px; top: -3px; color: #999; }
.dfields { display: grid; grid-template-columns: 83px 1fr; align-items: center; gap: 2px 3px; padding: 6px 3px 0 0; background: #f0eff0; }
.dfields label { text-align: right; }
.combo { position: relative; display: flex; align-items: center; height: 16px; padding-right: 1px; background: #fff; border: 1px solid #7fb0d8; color: #333; }
.combo input, .combo select { appearance: none; flex: 1; height: 100%; border: 0; padding: 0 3px; background: none; outline: 0; }
.combo select { padding: 0 1px; }
.combo .i8 { color: #777; }
.type { background: #e0dfe0; border-color: #cac9ca; }
.caret { position: absolute; left: 21px; top: 1px; width: 5px; height: 12px; }
.dfoot { display: flex; align-items: center; gap: 10px; height: 44px; padding: 9px 11px 0 7px; background: #f0eff0; }
.hide { gap: 4px; margin-right: auto; padding-top: 4px; }
.btn { width: 60px; height: 18px; justify-content: center; background: #e1e0e1; border: 1px solid #bdbcbd; }
.primary { width: 67px; border: 2px solid #3c8ac8; }
.grip { position: absolute; right: 0; bottom: 0; }

.taskbar { display: flex; height: 28px; flex: none; background: linear-gradient(90deg, #35291f, #3a2c26 40%, #4a3d32 80%, #3f342d); color: #eee; }
.task { height: 28px; overflow: hidden; }
.icon { width: 35px; justify-content: center; }
.start { width: 33px; margin-right: 5px; }
.wide { width: 106px; gap: 3px; padding: 0 4px; }
.icon + .wide, .wide + .wide { margin-left: 3px; }
.icon.start + .wide { margin-left: 0; }
.wide + .icon { margin-left: 2px; }
.run { border-bottom: 2px solid #76b3e6; padding-top: 2px; }
.active { width: 111px; background: #655a52; padding-left: 8px; }
.tray { display: flex; align-items: center; gap: 8px; margin-left: auto; padding-right: 16px; }
.tray time { text-align: center; padding-right: 6px; margin-left: 0; }
```
